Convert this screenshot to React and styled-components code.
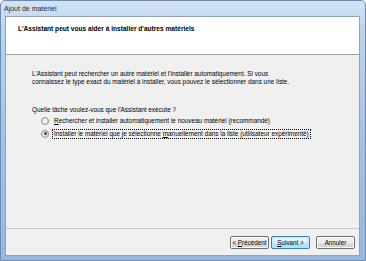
import React from 'react';
import styled, { createGlobalStyle } from 'styled-components';

const Global = createGlobalStyle`
  html, body { margin: 0; padding: 0; background: #fff; }
  body { font-family: 'Liberation Sans', Arial, sans-serif; }
`;

const Frame = styled.div`
  width: 366px;
  height: 261px;
  box-sizing: border-box;
  display: flex;
  flex-direction: column;
  padding: 0 5px 4px 4px;
  background: linear-gradient(180deg, #d3e3f4 0%, #bcd3ec 12%, #a2c0e4 60%, #98b8e0 100%);
  border: 1px solid #6d8bb3;
  border-radius: 5px 5px 0 0;
`;

const TitleBar = styled.div`
  height: 15px;
  display: flex;
  align-items: center;
  font-size: 7px;
  color: #1e2b3c;
  margin-left: -1px;
`;

const Client = styled.div`
  flex: 1;
  display: flex;
  flex-direction: column;
  background: #f0f0f0;
  border: 1px solid #8ea5c2;
`;

const Header = styled.div`
  height: 38px;
  background: #fff;
  border-bottom: 1px solid #a0a0a0;
  box-sizing: border-box;
  padding: 8px 0 0 12px;
`;

const HeaderTitle = styled.div`
  font-size: 6.6px;
  font-weight: bold;
  color: #000;
`;

const Body = styled.div`
  flex: 1;
  padding: 15px 0 0 26px;
  font-size: 6.4px;
  color: #000;
`;

const Para = styled.p`
  margin: 0;
  line-height: 8px;
`;

const Question = styled.div`
  margin-top: 20px;
  line-height: 8px;
`;

const Options = styled.div`
  margin-top: 2px;
  padding-left: 9px;
  display: flex;
  flex-direction: column;
  gap: 4px;
`;

const Option = styled.div`
  display: flex;
  align-items: center;
  gap: 3px;
  height: 9px;
`;

const Radio = styled.span`
  width: 6px;
  height: 6px;
  border-radius: 50%;
  border: 1px solid #8e8f8f;
  background: radial-gradient(circle, #f4f4f4 0%, #e0e0e0 100%);
  display: flex;
  align-items: center;
  justify-content: center;
  &::after {
    content: '';
    width: 3px;
    height: 3px;
    border-radius: 50%;
    background: ${p => (p.$checked ? '#1b4f8a' : 'transparent')};
  }
`;

const Label = styled.span`
  line-height: 8px;
  padding: 0 1px;
  border: 1px ${p => (p.$focus ? 'dotted #000' : 'solid transparent')};
  white-space: nowrap;
`;

const Footer = styled.div`
  height: 26px;
  border-top: 1px solid #c8c8c8;
  display: flex;
  align-items: center;
  justify-content: flex-end;
  padding-right: 4px;
`;

const Button = styled.button`
  width: ${p => p.$w || 39}px;
  height: 13px;
  margin-left: ${p => p.$gap || 0}px;
  padding: 0;
  font-family: inherit;
  font-size: 6.3px;
  color: #000;
  border-radius: 2px;
  border: 1px solid ${p => (p.$default ? '#3c7fb1' : '#707070')};
  background: ${p =>
    p.$default
      ? 'linear-gradient(180deg, #eaf6fd 0%, #d9f0fc 50%, #bee6fd 51%, #a7d9f5 100%)'
      : 'linear-gradient(180deg, #f2f2f2 0%, #ebebeb 50%, #dddddd 51%, #cfcfcf 100%)'};
  box-shadow: inset 0 0 0 1px ${p => (p.$default ? '#c4e5f6' : '#fcfcfc')};
`;

export default function App() {
  return (
    <>
      <Global />
      <Frame>
        <TitleBar>Ajout de matériel</TitleBar>
        <Client>
          <Header>
            <HeaderTitle>L'Assistant peut vous aider à installer d'autres matériels</HeaderTitle>
          </Header>
          <Body>
            <Para>
              L'Assistant peut rechercher un autre matériel et l'installer automatiquement. Si vous
              <br />
              connaissez le type exact du matériel à installer, vous pouvez le sélectionner dans une liste.
            </Para>
            <Question>Quelle tâche voulez-vous que l'Assistant exécute ?</Question>
            <Options>
              <Option>
                <Radio />
                <Label>
                  <u>R</u>echercher et installer automatiquement le nouveau matériel (recommandé)
                </Label>
              </Option>
              <Option>
                <Radio $checked />
                <Label $focus>
                  Installer le matériel que je sélectionne <u>m</u>anuellement dans la liste (utilisateur expérimenté)
                </Label>
              </Option>
            </Options>
          </Body>
          <Footer>
            <Button>
              &lt; <u>P</u>récédent
            </Button>
            <Button $default $gap={2}>
              <u>S</u>uivant &gt;
            </Button>
            <Button $gap={6}>Annuler</Button>
          </Footer>
        </Client>
      </Frame>
    </>
  );
}
